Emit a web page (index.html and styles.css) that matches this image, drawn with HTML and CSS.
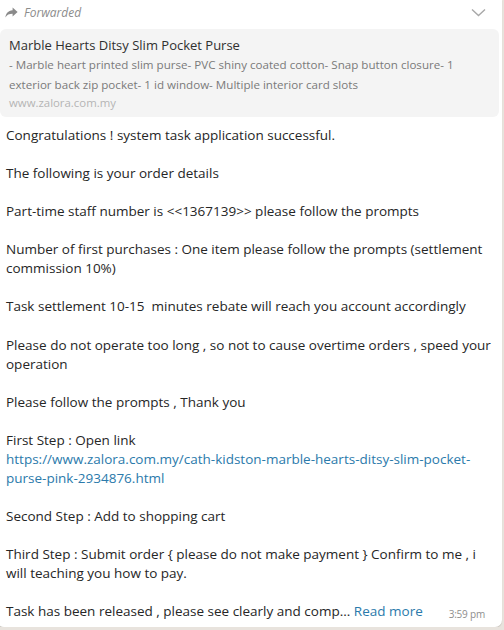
FILE: index.html
```html
<!DOCTYPE html>
<html lang="en">
<head>
	<meta charset="UTF-8">
	<title>Forwarded message</title>
	<link rel="stylesheet" href="styles.css">
</head>
<body>
	<div class="bubble">
		<div class="bubble-head">
			<span class="fwd">
				<svg width="13" height="11" viewBox="0 0 13 11"><path d="M7.6 0.6 L12.6 5 L7.6 9.4 L7.6 6.8 C4.2 6.8 2 7.8 0.4 10.4 C0.9 6.4 3 3.6 7.6 3.2 Z" fill="#8a8a8a"/></svg>
				Forwarded
			</span>
			<svg class="chev" width="15" height="9" viewBox="0 0 15 9"><path d="M1 1.5 L7.5 7.5 L14 1.5" fill="none" stroke="#a8a8a8" stroke-width="1.4"/></svg>
		</div>
		<div class="preview">
			<div class="preview-title">Marble Hearts Ditsy Slim Pocket Purse</div>
			<div class="preview-desc">- Marble heart printed slim purse- PVC shiny coated cotton- Snap button closure- 1 exterior back zip pocket- 1 id window- Multiple interior card slots</div>
			<div class="preview-url">www.zalora.com.my</div>
		</div>
		<div class="msg-text">Congratulations ! system task application successful.

The following is your order details

Part-time staff number is &lt;&lt;1367139&gt;&gt; please follow the prompts

Number of first purchases : One item please follow the prompts (settlement commission 10%)

Task settlement 10-15  minutes rebate will reach you account accordingly

Please do not operate too long , so not to cause overtime orders , speed your operation

Please follow the prompts , Thank you

First Step : Open link
<a href="#">https://www.zalora.com.my/cath-kidston-marble-hearts-ditsy-slim-pocket-purse-pink-2934876.html</a>

Second Step : Add to shopping cart

Third Step : Submit order { please do not make payment } Confirm to me , i will teaching you how to pay.</div>
		<div class="last-line">
			<span>Task has been released , please see clearly and comp... <a href="#">Read more</a></span>
			<span class="time">3:59 pm</span>
		</div>
	</div>
</body>
</html>
```

FILE: styles.css
```css
body {
	margin: 0;
	background: #e8e3dd;
	font-family: "Open Sans", "Noto Sans", sans-serif;
	color: #262626;
	overflow: hidden;
}
.bubble {
	margin-left: -3px;
	width: 499px;
	background: #fff;
	border-radius: 0 0 7px 7px;
	box-shadow: 0 1px 1px rgba(0, 0, 0, 0.14);
	padding: 0 3px 6px 3px;
}
.bubble-head {
	display: flex;
	justify-content: space-between;
	align-items: center;
	height: 25px;
	padding: 0 13px 0 5px;
}
.fwd {
	display: flex;
	align-items: center;
	gap: 6px;
	font-size: 12px;
	font-style: italic;
	color: #8c8c8c;
}
.preview {
	margin-top: 4px;
	background: #f4f4f4;
	border-radius: 6px;
	padding: 7px 8px 7px 9px;
	height: 74px;
}
.preview-title {
	font-size: 13px;
	line-height: 19px;
	color: #303030;
}
.preview-desc {
	font-size: 11.6px;
	line-height: 19.5px;
	color: #7a7a7a;
}
.preview-url {
	font-size: 11.4px;
	line-height: 18px;
	color: #b5b5b5;
}
.msg-text {
	margin-top: 9px;
	padding: 0 6px;
	font-size: 13.5px;
	line-height: 19.05px;
	white-space: pre-wrap;
	word-break: break-word;
}
.msg-text a,
.last-line a {
	color: #2b7aab;
	text-decoration: none;
}
.last-line {
	display: flex;
	justify-content: space-between;
	align-items: flex-end;
	margin-top: 19px;
	padding: 0 14px 0 6px;
	font-size: 13.5px;
	line-height: 19px;
}
.time {
	font-size: 10px;
	letter-spacing: -0.2px;
	line-height: 14px;
	color: #8e8e8e;
}
```
